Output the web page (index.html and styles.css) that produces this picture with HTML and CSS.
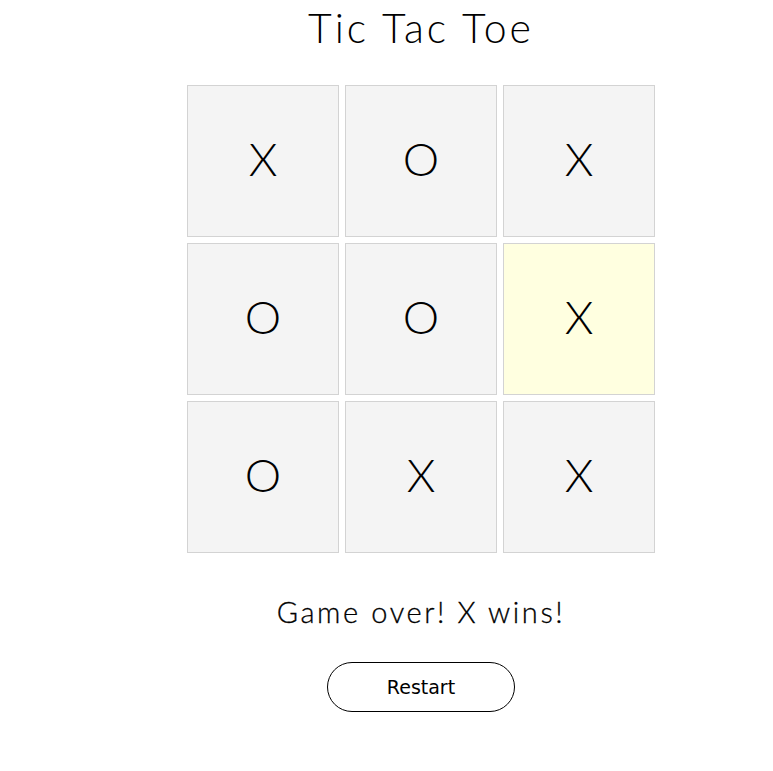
FILE: index.html
```html
<!DOCTYPE html>
<html>
<head>
<meta charset="utf-8">
<title>Tic Tac Toe</title>
<link rel="stylesheet" href="styles.css">
</head>
<body>
<main class="game">
  <h1 class="title">Tic Tac Toe</h1>
  <div class="board">
    <div class="cell">X</div>
    <div class="cell">O</div>
    <div class="cell">X</div>
    <div class="cell">O</div>
    <div class="cell">O</div>
    <div class="cell win">X</div>
    <div class="cell">O</div>
    <div class="cell">X</div>
    <div class="cell">X</div>
  </div>
  <p class="status">Game over! X wins!</p>
  <button class="restart">Restart</button>
</main>
</body>
</html>
```
FILE: styles.css
```css
html, body {
  margin: 0;
  padding: 0;
  background: #fff;
}
body {
  font-family: "Lato", "Noto Sans", sans-serif;
  font-weight: 300;
  color: #000;
}
.game {
  width: 468px;
  margin-left: 187px;
  display: flex;
  flex-direction: column;
  align-items: center;
}
.title {
  margin: 4px 0 0;
  font-size: 41px;
  font-weight: 300;
  line-height: 48px;
  letter-spacing: 3px;
}
.board {
  margin-top: 33px;
  display: grid;
  grid-template-columns: repeat(3, 152px);
  grid-template-rows: repeat(3, 152px);
  gap: 6px;
}
.cell {
  box-sizing: border-box;
  background: #f4f4f4;
  border: 1px solid #d3d3d3;
  display: flex;
  align-items: center;
  justify-content: center;
  padding-bottom: 5px;
  font-size: 46px;
  font-weight: 300;
}
.cell.win {
  background: #ffffe0;
}
.status {
  margin: 42px 0 0;
  font-size: 29px;
  font-weight: 300;
  line-height: 34px;
  letter-spacing: 2.6px;
  -webkit-text-stroke: 0.3px #000;
}
.restart {
  margin-top: 33px;
  width: 188px;
  height: 50px;
  border: 1px solid #000;
  border-radius: 25px;
  background: #fff;
  font-family: "DejaVu Sans", sans-serif;
  font-size: 19px;
  color: #000;
}
```
